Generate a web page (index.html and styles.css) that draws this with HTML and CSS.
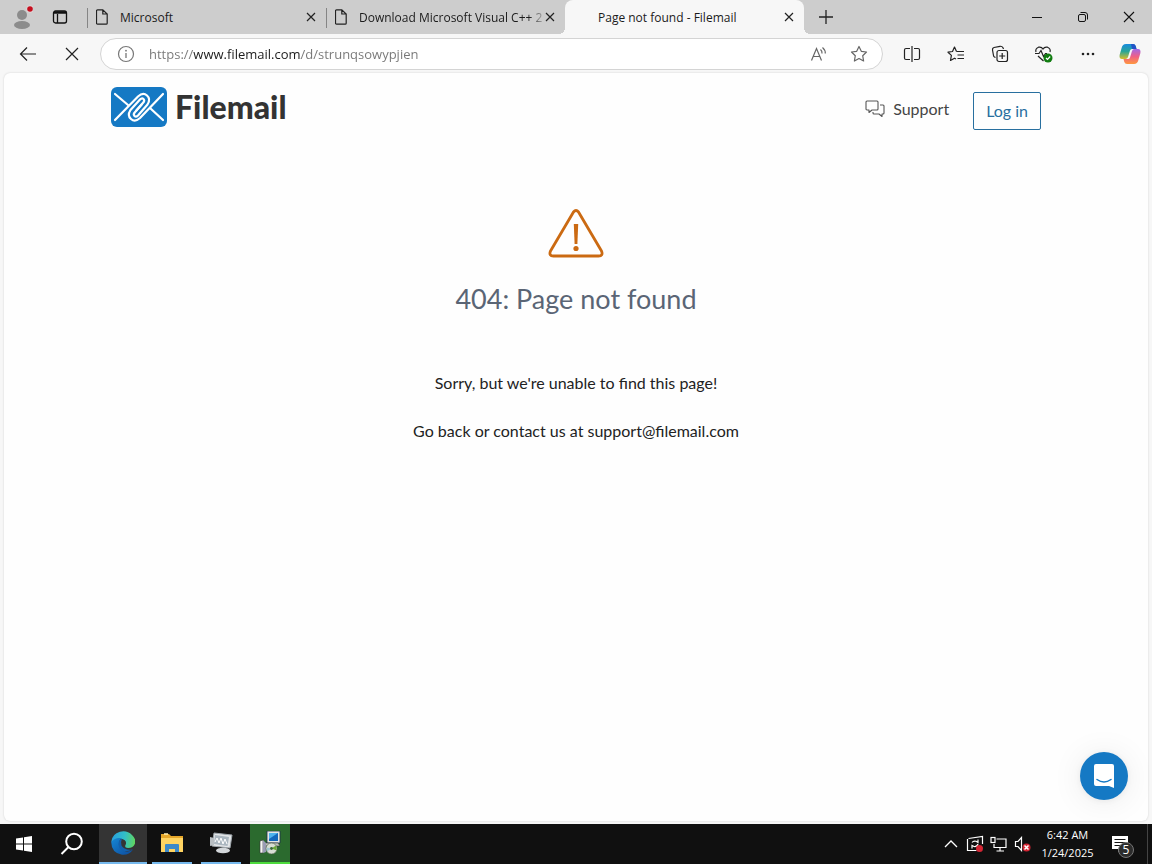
FILE: index.html
```html
<!DOCTYPE html>
<html lang="en">
<head>
    <meta charset="utf-8">
    <title>Page not found - Filemail</title>
    <link rel="stylesheet" href="styles.css">
</head>
<body>
    <!-- Tab strip -->
    <div class="tab-strip">
        <button class="strip-button" aria-label="Profile">
            <svg width="22" height="24" viewBox="0 0 22 24"><circle cx="11" cy="10" r="5" fill="#8c8c8c"/><ellipse cx="11" cy="20" rx="8" ry="4" fill="#8c8c8c"/><circle cx="19" cy="4" r="3.5" fill="#e5dada"/><circle cx="19" cy="4" r="2.8" fill="#c50f1f"/></svg>
        </button>
        <button class="strip-button" aria-label="Tab actions">
            <svg width="16" height="16" viewBox="0 0 16 16" fill="none" stroke="#111" stroke-width="1.3"><rect x="1.5" y="2" width="13" height="12" rx="2"/><path d="M2 3.5h12" stroke-width="2.5"/><path d="M5.500 5v9"/></svg>
        </button>
        <div class="tabs">
            <div class="tab">
                <svg class="tab-icon" width="12" height="16" viewBox="0 0 12 16"><path d="M1.5 .8h5.300L11.200 5v9.200a1 1 0 0 1-1 1H1.500a1 1 0 0 1-1-1V1.800a1 1 0 0 1 1-1zM6.800 .8V5h4.400" fill="none" stroke="#222" stroke-width="1.200"/></svg>
                <span class="tab-title">Microsoft</span>
                <button class="tab-close" aria-label="Close tab"><svg width="10" height="10" viewBox="0 0 10 10"><path d="M1 1l8 8M9 1L1 9" stroke="#222" stroke-width="1.200"/></svg></button>
            </div>
            <div class="tab">
                <svg class="tab-icon" width="12" height="16" viewBox="0 0 12 16"><path d="M1.5 .8h5.300L11.200 5v9.200a1 1 0 0 1-1 1H1.500a1 1 0 0 1-1-1V1.800a1 1 0 0 1 1-1zM6.800 .8V5h4.400" fill="none" stroke="#222" stroke-width="1.200"/></svg>
                <span class="tab-title tab-title-long">Download Microsoft Visual C++ 2</span>
                <button class="tab-close" aria-label="Close tab"><svg width="10" height="10" viewBox="0 0 10 10"><path d="M1 1l8 8M9 1L1 9" stroke="#222" stroke-width="1.200"/></svg></button>
            </div>
            <div class="tab active">
                <span class="tab-icon"></span>
                <span class="tab-title">Page not found - Filemail</span>
                <button class="tab-close" aria-label="Close tab"><svg width="10" height="10" viewBox="0 0 10 10"><path d="M1 1l8 8M9 1L1 9" stroke="#222" stroke-width="1.200"/></svg></button>
            </div>
            <button class="new-tab" aria-label="New tab"><svg width="14" height="14" viewBox="0 0 14 14"><path d="M7 0v14M0 7h14" stroke="#222" stroke-width="1.300"/></svg></button>
        </div>
        <div class="window-controls">
            <button aria-label="Minimize"><svg width="10" height="10" viewBox="0 0 10 10"><path d="M0 5.500h10" stroke="#111"/></svg></button>
            <button aria-label="Restore"><svg width="12" height="12" viewBox="0 0 12 12" fill="none" stroke="#111"><rect x="1.500" y="3.500" width="7" height="7" rx="1.500"/><path d="M3.500 1.500H8A2.500 2.500 0 0 1 10.500 4v4.500"/></svg></button>
            <button aria-label="Close"><svg width="12" height="12" viewBox="0 0 12 12"><path d="M1 1l10 10M11 1L1 11" stroke="#111" stroke-width="1.100"/></svg></button>
        </div>
    </div>

    <!-- Toolbar -->
    <div class="toolbar">
        <button class="tool-button" aria-label="Back"><svg width="18" height="16" viewBox="0 0 18 16"><path d="M8 1.500L1.500 8 8 14.500M1.500 8H17" fill="none" stroke="#222" stroke-width="1.200"/></svg></button>
        <button class="tool-button" aria-label="Stop"><svg width="14" height="14" viewBox="0 0 14 14"><path d="M1 1l12 12M13 1L1 13" stroke="#222" stroke-width="1.200"/></svg></button>
        <div class="address-bar">
            <svg width="18" height="18" viewBox="0 0 18 18"><circle cx="9" cy="9" r="7.500" fill="none" stroke="#777" stroke-width="1.200"/><path d="M9 8v5" stroke="#777" stroke-width="1.300"/><circle cx="9" cy="5.700" r=".9" fill="#777"/></svg>
            <input class="address" type="text" aria-label="Address" value="https://www.filemail.com/d/strunqsowypjien">
            <button aria-label="Read aloud"><svg width="18" height="16" viewBox="0 0 18 16" fill="none" stroke="#666" stroke-width="1.200"><path d="M1.500 14.500L6.500 2.500l5 12M3.200 10.500h6.600M10.500 3.500q1.800 1.500 1.500 4M12.500 1.500q3 2.500 2.800 6"/></svg></button>
            <button aria-label="Add to favorites"><svg width="18" height="18" viewBox="0 0 18 18"><path d="M9 1.500l2.300 4.800 5.200.7-3.800 3.700.9 5.300L9 13.500 4.400 16l.9-5.300L1.500 7l5.200-.7z" fill="none" stroke="#666" stroke-width="1.200" stroke-linejoin="round"/></svg></button>
        </div>
        <button class="tool-button" aria-label="Split screen"><svg width="18" height="16" viewBox="0 0 18 16" fill="none" stroke="#222" stroke-width="1.200"><path d="M7 2.500H3a1.500 1.500 0 0 0-1.500 1.500v8A1.500 1.500 0 0 0 3 13.500h4M11 2.500h4A1.500 1.500 0 0 1 16.500 4v8a1.500 1.500 0 0 1-1.500 1.500h-4M9 0v16"/></svg></button>
        <button class="tool-button" aria-label="Favorites"><svg width="18" height="18" viewBox="0 0 18 18" fill="none" stroke="#222" stroke-width="1.200"><path d="M9.500 6.500L7.500 2 5.500 6.500l-4.500.7 3.400 3.200-.9 5.100 4-2.300 1.500.8M9.500 6.500H17M10.500 10H17M10.500 13.500H17" stroke-linejoin="round"/></svg></button>
        <button class="tool-button" aria-label="Collections"><svg width="18" height="18" viewBox="0 0 18 18" fill="none" stroke="#222" stroke-width="1.200"><path d="M4.500 12.500l-1-.5a2 2 0 0 1-1-1.500L1.500 5q-.3-2 1.500-2.500l6-1.200q2-.3 3 1.500l.5 1.200"/><rect x="6" y="5.500" width="10.500" height="11" rx="2"/><path d="M11.200 8v6M8.200 11h6"/></svg></button>
        <button class="tool-button" aria-label="Browser essentials"><svg width="20" height="18" viewBox="0 0 20 18" fill="none" stroke="#222" stroke-width="1.200"><path d="M2 7Q1 3.500 4.500 2.200 7.500 1.500 9 4q1.500-2.500 4.500-1.800Q17 3.500 16 7M1 8.500h4L7 5.500l2.500 6 2-3H13M4 11l5.500 5"/><circle cx="14" cy="13" r="4.500" fill="#107c10" stroke="none"/><path d="M12 13l1.500 1.500 2.700-3" stroke="#fff"/></svg></button>
        <button class="tool-button" aria-label="Settings and more"><svg width="14" height="4" viewBox="0 0 14 4" fill="#222"><circle cx="2" cy="2" r="1.300"/><circle cx="7" cy="2" r="1.300"/><circle cx="12" cy="2" r="1.300"/></svg></button>
        <button class="tool-button copilot" aria-label="Copilot">
            <svg width="22" height="22" viewBox="0 0 22 22">
                <defs>
                    <linearGradient id="cool" x1="0" y1="0" x2="0" y2="1"><stop offset="0" stop-color="#178bdf"/><stop offset=".5" stop-color="#2aa596"/><stop offset="1" stop-color="#d7bd2b"/></linearGradient>
                    <linearGradient id="warm" x1="0" y1="0" x2="0" y2="1"><stop offset="0" stop-color="#a267e6"/><stop offset=".5" stop-color="#ef6086"/><stop offset="1" stop-color="#ff983e"/></linearGradient>
                </defs>
                <path d="M7 1h7q2 0 2.700 2l.8 3H13q-1.500 0-2 1.500L9 14q-.6 2-2.500 2H3q-3 0-2.400-4l2-7Q3.500 1 7 1z" fill="url(#cool)"/>
                <path d="M12 1h2q2 0 2.700 2l.8 3H13z" fill="#2253c6"/>
                <path d="M15 21H8q-2 0-2.700-2l-.8-3H9q1.500 0 2-1.500L13 8q.6-2 2.500-2H19q3 0 2.400 4l-2 7q-.9 4-4.400 4z" fill="url(#warm)"/>
            </svg>
        </button>
    </div>

    <!-- Web page -->
    <div class="viewport">
        <div class="page">
            <header class="site-header">
                <a class="logo" href="#">
                    <svg width="56" height="40" viewBox="0 0 56 40">
                        <rect width="56" height="40" rx="6" fill="#1579c4"/>
                        <g fill="none" stroke="#fff" stroke-width="2.200" stroke-linecap="round" stroke-linejoin="round">
                            <path d="M4 7l13 11M52 33L39 21"/>
                            <path d="M4 33L27 9.500q5-4.500 9-1t.5 9L27 28.500q-2 2-3.500.5t.2-3.500l7-8"/>
                            <path d="M52 7L29 31q-5 4.500-9 1t-.5-9L29 12.500q2-2 3.500-.5t-.2 3.500l-7 8"/>
                        </g>
                    </svg>
                    <span class="logo-text">Filemail</span>
                </a>
                <nav class="site-nav">
                    <a class="support" href="#">
                        <svg width="20" height="18" viewBox="0 0 20 18" fill="none" stroke="#555" stroke-width="1.100" stroke-linejoin="round"><path d="M2 1h10a1 1 0 0 1 1 1v7a1 1 0 0 1-1 1H7l-3 2.500V10H2a1 1 0 0 1-1-1V2a1 1 0 0 1 1-1z"/><path d="M15 5h3a1 1 0 0 1 1 1v7a1 1 0 0 1-1 1h-1v2.500L14 14H9a1 1 0 0 1-1-1v-1"/></svg>
                        Support
                    </a>
                    <a class="login" href="#">Log in</a>
                </nav>
            </header>
            <main class="message">
                <svg width="56" height="50" viewBox="0 0 56 50" fill="none" stroke="#cb6a12" stroke-linejoin="round"><path d="M25.500 3q2.500-3 5 0l23 39q2 5-3 5h-45q-5 0-3-5z" stroke-width="2.800"/><path d="M25.800 15h4.400l-.8 20h-2.800z" fill="#cb6a12" stroke="none"/><circle cx="28" cy="39.500" r="2.600" fill="#cb6a12" stroke="none"/></svg>
                <h1>404: Page not found</h1>
                <p>Sorry, but we're unable to find this page!</p>
                <p>Go back or contact us at support@filemail.com</p>
            </main>
            <button class="chat-button" aria-label="Open chat">
                <svg width="24" height="26" viewBox="0 0 24 26"><path d="M4 1h16q2 0 2 2v22l-5-2H4q-2 0-2-2V3q0-2 2-2z" fill="#fff"/><path d="M5 16.500q7 5 14 0" fill="none" stroke="#1579c4" stroke-width="1.500" stroke-linecap="round"/></svg>
            </button>
        </div>
    </div>

    <!-- Taskbar -->
    <div class="taskbar">
        <button class="task-button" aria-label="Start"><svg width="16" height="16" viewBox="0 0 16 16" fill="#fff"><path d="M0 2.500l7-1v6H0zM8 1.300L16 0v7.500H8zM0 8.500h7v6l-7-1zM8 8.500h8V16l-8-1.200z"/></svg></button>
        <button class="task-button" aria-label="Search"><svg width="24" height="24" viewBox="0 0 24 24" fill="none" stroke="#fff" stroke-width="2"><circle cx="14" cy="9.500" r="7.800"/><path d="M8.500 15L1.500 22"/></svg></button>
        <div class="task-apps">
            <button class="task-button task-current" aria-label="Microsoft Edge">
                <svg width="24" height="24" viewBox="0 0 24 24">
                    <defs>
                        <linearGradient id="edge-top" x1="0" y1=".4" x2="1" y2=".5"><stop offset="0" stop-color="#289fe0"/><stop offset=".55" stop-color="#32bfc6"/><stop offset="1" stop-color="#62d65c"/></linearGradient>
                        <linearGradient id="edge-side" x1="0" y1="0" x2="1" y2="1"><stop offset="0" stop-color="#1687d5"/><stop offset="1" stop-color="#0c4a9b"/></linearGradient>
                    </defs>
                    <path d="M.2 11Q1 3 9 .8 16-1 21 4t2.800 9q-1.500 4-6.800 4-4-.5-2.500-3 1.500-3-1-5Q8 5.500.2 11z" fill="url(#edge-top)"/>
                    <path d="M.2 11Q5 5.500 11 7.500 7.500 9 8 14q1 5 7 6.500 4 .5 7-2-4 6-11 5.300Q.5 22 .2 11z" fill="url(#edge-side)"/>
                    <path d="M11 7.500Q6 10 8 16q3 7 14 2.500-9 1-11.500-4-1-4 .5-7z" fill="#1260ae"/>
                </svg>
            </button>
            <button class="task-button" aria-label="File Explorer">
                <svg width="24" height="20" viewBox="0 0 24 20"><path d="M1 1h8l2 2h12v16H1z" fill="#e6a72a"/><path d="M1 5h22v14H1z" fill="#ffd462"/><path d="M5 19v-7q0-1 1-1h12q1 0 1 1v7h-4v-3H9v3z" fill="#3c89c9"/><path d="M4 1h4" stroke="#fff1b5" stroke-width="1.500"/></svg>
            </button>
            <button class="task-button" aria-label="System monitor">
                <svg width="24" height="22" viewBox="0 0 24 22"><path d="M5 1l18 2-2 13L3 14z" fill="#e2e5e7" stroke="#9ba3a9"/><path d="M6 3l14 2-1.500 9L5 12z" fill="#aab6bf"/><path d="M6 10l2-4 2 5 2-5 2 6 2-5 2 5" fill="none" stroke="#fff"/><ellipse cx="14" cy="18.500" rx="7" ry="2.800" fill="#d3d7da"/><path d="M1 5l4 1v7l-4 1z" fill="#b8bec2"/></svg>
            </button>
            <button class="task-button task-installer" aria-label="Installer">
                <svg width="22" height="24" viewBox="0 0 22 24"><path d="M8 0h13v12H8z" fill="#e5e7e3" stroke="#1d2f4a" stroke-width=".8"/><path d="M10 2h9v8h-9z" fill="#1468bd"/><path d="M10 2h9l-9 6z" fill="#4fb2ed"/><path d="M6 12h13l2 3H7z" fill="#bcc1bb" stroke="#333" stroke-width=".5"/><path d="M1 10l3-1v13H1z" fill="#f4f4f4" stroke="#333" stroke-width=".6"/><path d="M4 9l3 3v9l-3 1z" fill="#9a9cb5"/><circle cx="12.500" cy="17.500" r="5.500" fill="#d8ded3" stroke="#4c5a46" stroke-width=".6"/><path d="M12.500 17.500l4.500-3 .8 5z" fill="#6ba83b"/><path d="M12.500 17.500l-4.500 3-.5-4z" fill="#9fc7cf"/><circle cx="12.500" cy="17.500" r="1.400" fill="#386839"/></svg>
            </button>
        </div>
        <div class="tray">
            <button aria-label="Show hidden icons"><svg width="14" height="8" viewBox="0 0 14 8"><path d="M1 7l6-6 6 6" fill="none" stroke="#fff" stroke-width="1.300"/></svg></button>
            <button aria-label="Update status"><svg width="18" height="18" viewBox="0 0 18 18" fill="none" stroke="#fff" stroke-width="1.200"><path d="M16.500 9V1.500L2.500 3.500M1.500 4v11.500h9M6 7.500q1.500-2 4-1.200l2 1.200V4.500M12 9q-1 3-4 2.500L6 10.500v3"/><circle cx="13.500" cy="13.500" r="3.500" fill="#d32533" stroke="none"/></svg></button>
            <button aria-label="Network"><svg width="18" height="16" viewBox="0 0 18 16" fill="none" stroke="#fff" stroke-width="1.200"><path d="M6.500 3H16v8.500H4V8M10 11.500V15M6.500 15H14"/><rect x="1" y="1.500" width="4" height="5"/></svg></button>
            <button aria-label="Volume"><svg width="18" height="16" viewBox="0 0 18 16" fill="none" stroke="#fff" stroke-width="1.200"><path d="M1.500 5.500H4l3.500-4v13l-3.500-4H1.500z"/><circle cx="12.500" cy="11.500" r="4" fill="#d32533" stroke="none"/><path d="M10.500 9.500l4 4M14.500 9.500l-4 4" stroke-width="1.500"/></svg></button>
            <button class="clock"><span>6:42 AM</span><span>1/24/2025</span></button>
            <button class="notifications" aria-label="5 notifications">
                <svg width="18" height="18" viewBox="0 0 18 18"><path d="M1 1h16v13h-7l-3 3v-3H1z" fill="#fff"/><path d="M3.500 4.500h11M3.500 7.500h11M3.500 10.500h7" stroke="#111" stroke-width="1.200"/></svg>
                <span class="badge">5</span>
            </button>
        </div>
    </div>
</body>
</html>
```

FILE: styles.css
```css
* {
    box-sizing: border-box;
}

body {
    margin: 0;
    min-height: 100vh;
    display: flex;
    flex-direction: column;
    background-color: #f7f7f7;
    font-family: "Open Sans", "Noto Sans", sans-serif;
    font-size: 12px;
    color: #1b1b1b;
}

button {
    display: flex;
    align-items: center;
    justify-content: center;
    flex-shrink: 0;
    padding: 0;
    border: none;
    background: none;
    color: inherit;
    font-family: inherit;
    font-size: 12px;
}

a {
    text-decoration: none;
}

svg {
    display: block;
    flex-shrink: 0;
}

/* Tab strip */
.tab-strip {
    display: flex;
    height: 34px;
    padding-left: 3px;
    background-color: #cdcdcd;
}

.strip-button {
    width: 38px;
}

.tabs {
    display: flex;
    flex: 1;
    min-width: 0;
    margin-left: 8px;
}

.tab {
    position: relative;
    display: flex;
    align-items: center;
    flex: 0 1 239px;
    min-width: 0;
    padding: 0 10px 0 9px;
}

.tab:not(.active)::before {
    content: "";
    position: absolute;
    left: 0;
    top: 8px;
    height: 20px;
    border-left: 1px solid #858585;
}

.tab.active {
    background-color: #f7f7f7;
    border-radius: 8px 8px 0 0;
}

/* Curved feet of the open tab */
.tab.active::before,
.tab.active::after {
    content: "";
    position: absolute;
    bottom: 0;
    width: 6px;
    height: 6px;
}

.tab.active::before {
    left: -6px;
    background: radial-gradient(circle at 0 0, transparent 6px, #f7f7f7 6px);
}

.tab.active::after {
    right: -6px;
    background: radial-gradient(circle at 100% 0, transparent 6px, #f7f7f7 6px);
}

.tab-icon {
    width: 12px;
    margin-right: 12px;
}

.tab-title {
    flex: 1;
    white-space: nowrap;
}

.tab-title-long {
    -webkit-mask-image: linear-gradient(to right, #000 170px, transparent 188px);
    mask-image: linear-gradient(to right, #000 170px, transparent 188px);
}

.new-tab {
    width: 44px;
}

.window-controls {
    display: flex;
}

.window-controls button {
    width: 46px;
}

/* Toolbar */
.toolbar {
    display: flex;
    align-items: center;
    height: 39px;
    padding: 0 2px 0 6px;
}

.tool-button {
    width: 44px;
    height: 32px;
}

.copilot {
    width: 40px;
}

.address-bar {
    display: flex;
    align-items: center;
    flex: 1;
    min-width: 0;
    height: 32px;
    margin: 0 7px 0 6px;
    padding: 0 3px 0 16px;
    border: 1px solid #d4d4d4;
    border-radius: 16px;
    background-color: #fff;
}

.address-bar button {
    width: 40px;
    height: 28px;
}

/* The host name is darker than the rest of the address */
.address {
    flex: 1;
    min-width: 0;
    height: 28px;
    margin-left: 14px;
    padding: 0;
    border: none;
    outline: none;
    background: linear-gradient(to right, #767676 44px, #1b1b1b 44px, #1b1b1b 152px, #767676 152px);
    -webkit-background-clip: text;
    background-clip: text;
    color: transparent;
    font-family: inherit;
    font-size: 13px;
}

/* Web page */
.viewport {
    display: flex;
    flex: 1;
    padding: 0 4px 3px;
}

.page {
    position: relative;
    flex: 1;
    border-radius: 6px;
    background-color: #fefefe;
    box-shadow: 0 0 2px #ccc;
    font-family: Lato, sans-serif;
    font-size: 16px;
    line-height: 24px;
    color: #222;
}

.site-header {
    display: flex;
    justify-content: space-between;
    max-width: 960px;
    margin: 0 auto;
    padding: 14px 15px 0;
}

.logo {
    display: flex;
    align-items: center;
    gap: 8px;
    height: 40px;
}

.logo-text {
    color: #333;
    font-size: 32px;
    font-weight: 900;
}

.site-nav {
    display: flex;
    align-items: center;
    gap: 24px;
    padding-top: 5px;
}

.support {
    display: flex;
    align-items: center;
    gap: 8px;
    padding-bottom: 4px;
    color: #444;
}

.login {
    padding: 6px 12px;
    border: 1px solid #286f9f;
    border-radius: 2px;
    color: #286f9f;
}

.message {
    display: flex;
    flex-direction: column;
    align-items: center;
    margin-top: 79px;
    padding: 0 15px;
    text-align: center;
}

.message h1 {
    margin: 20px 0 52px;
    color: #5a6575;
    font-size: 27px;
    font-weight: 400;
    line-height: 40px;
}

.message p {
    margin: 0 0 24px;
}

.chat-button {
    position: absolute;
    right: 20px;
    bottom: 21px;
    width: 48px;
    height: 48px;
    border-radius: 50%;
    background-color: #1579c4;
    box-shadow: 0 1px 6px rgba(0, 0, 0, 0.06), 0 2px 32px rgba(0, 0, 0, 0.08);
}

/* Taskbar */
.taskbar {
    display: flex;
    justify-content: space-between;
    height: 40px;
    background-color: #101010;
    color: #fff;
}

.task-button {
    width: 48px;
    height: 40px;
}

.task-apps {
    display: flex;
    flex: 1;
    gap: 1px;
    margin-left: 3px;
}

.task-apps .task-button {
    border-bottom: 2px solid #76b9ed;
}

.task-apps .task-button:not(.task-current) {
    width: 40px;
    margin: 0 4px;
}

.task-apps .task-current {
    background-color: #343434;
}

.task-apps .task-installer {
    background-color: #2b6a2e;
    border-bottom-color: #4cdb3c;
}

.tray {
    display: flex;
    padding-right: 4px;
}

.tray button {
    width: 24px;
}

.tray .clock {
    flex-direction: column;
    width: 65px;
    font-size: 11px;
    line-height: 18px;
}

.tray .notifications {
    position: relative;
    width: 48px;
    padding-right: 8px;
    border-right: 1px solid #444;
}

.badge {
    position: absolute;
    left: 18px;
    top: 18px;
    width: 16px;
    height: 16px;
    border: 1px solid #777;
    border-radius: 50%;
    background-color: #2c2c2c;
    line-height: 14px;
}
```
